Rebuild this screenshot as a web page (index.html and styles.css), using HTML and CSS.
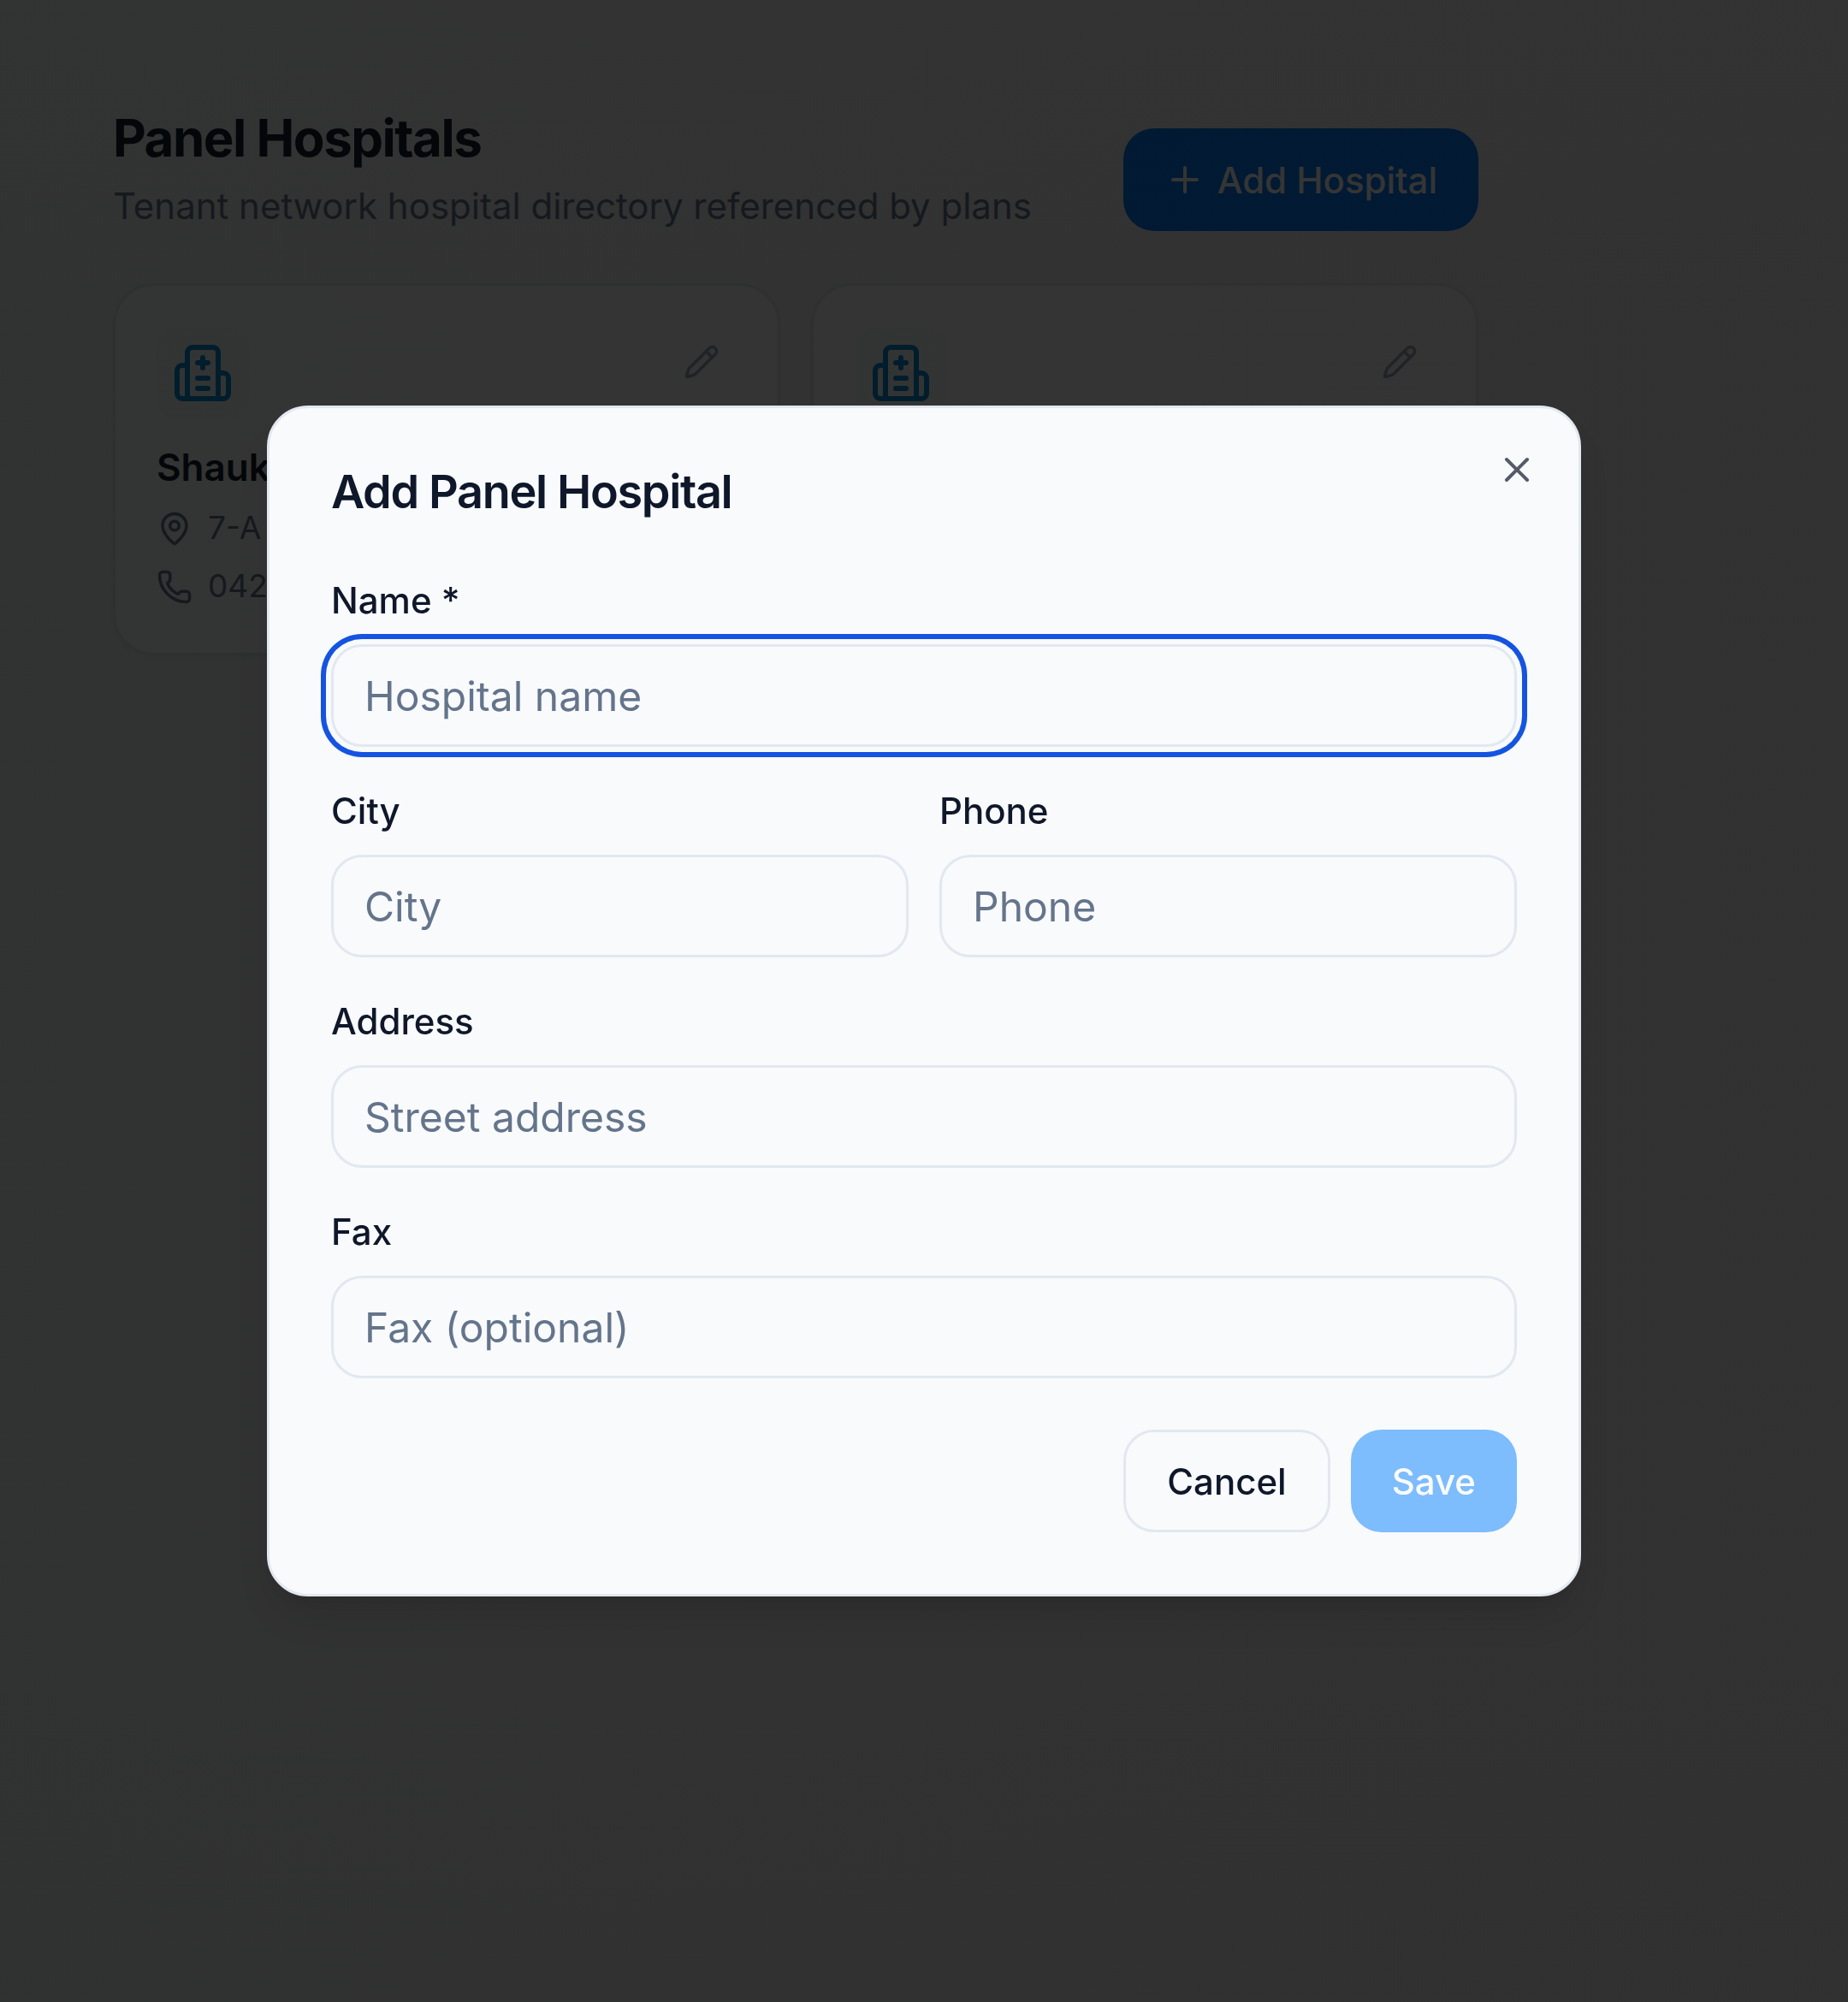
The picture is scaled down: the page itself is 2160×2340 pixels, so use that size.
FILE: index.html
```html
<!DOCTYPE html>
<html lang="en">
<head>
<meta charset="utf-8">
<title>Panel Hospitals</title>
<link rel="stylesheet" href="styles.css">
</head>
<body>
<svg class="sprite" aria-hidden="true">
  <symbol id="i-hospital" viewBox="0 0 24 24"><path d="M12 6v4"/><path d="M14 14h-4"/><path d="M14 18h-4"/><path d="M14 8h-4"/><path d="M18 12h2a2 2 0 0 1 2 2v6a2 2 0 0 1-2 2H4a2 2 0 0 1-2-2v-9a2 2 0 0 1 2-2h2"/><path d="M18 22V4a2 2 0 0 0-2-2H8a2 2 0 0 0-2 2v18"/></symbol>
  <symbol id="i-pencil" viewBox="0 0 24 24"><path d="M21.174 6.812a1 1 0 0 0-3.986-3.987L3.842 16.174a2 2 0 0 0-.5.83l-1.321 4.352a.5.5 0 0 0 .623.622l4.353-1.32a2 2 0 0 0 .83-.497z"/><path d="m15 5 4 4"/></symbol>
</svg>
<main class="page">
  <header class="page-head">
    <div>
      <h1 class="page-title">Panel Hospitals</h1>
      <p class="page-sub">Tenant network hospital directory referenced by plans</p>
    </div>
    <button class="add-btn" type="button">
      <svg class="icon icon-plus" viewBox="0 0 24 24"><path d="M5 12h14"/><path d="M12 5v14"/></svg>
      Add Hospital
    </button>
  </header>
  <section class="cards">
    <article class="card">
      <div class="card-top">
        <span class="card-badge"><svg class="icon icon-hospital"><use href="#i-hospital"/></svg></span>
        <button class="edit-btn" type="button"><svg class="icon icon-pencil"><use href="#i-pencil"/></svg></button>
      </div>
      <h2 class="card-name">Shauk</h2>
      <div class="card-row">
        <svg class="icon icon-row" viewBox="0 0 24 24"><path d="M20 10c0 4.993-5.539 10.193-7.399 11.799a1 1 0 0 1-1.202 0C9.539 20.193 4 14.993 4 10a8 8 0 0 1 16 0"/><circle cx="12" cy="10" r="3"/></svg>
        <span class="card-row-text">7-A</span>
      </div>
      <div class="card-row">
        <svg class="icon icon-row" viewBox="0 0 24 24"><path d="M13.832 16.568a1 1 0 0 0 1.213-.303l.355-.465A2 2 0 0 1 17 15h3a2 2 0 0 1 2 2v3a2 2 0 0 1-2 2A18 18 0 0 1 2 4a2 2 0 0 1 2-2h3a2 2 0 0 1 2 2v3a2 2 0 0 1-.8 1.6l-.468.351a1 1 0 0 0-.292 1.233 14 14 0 0 0 6.392 6.384"/></svg>
        <span class="card-row-text">042</span>
      </div>
    </article>
    <article class="card">
      <div class="card-top">
        <span class="card-badge"><svg class="icon icon-hospital"><use href="#i-hospital"/></svg></span>
        <button class="edit-btn" type="button"><svg class="icon icon-pencil"><use href="#i-pencil"/></svg></button>
      </div>
    </article>
  </section>
</main>

<div class="overlay">
  <div class="modal" role="dialog" aria-label="Add Panel Hospital">
    <button class="close-btn" type="button" aria-label="Close">
      <svg class="icon icon-close" viewBox="0 0 24 24"><path d="M18 6 6 18"/><path d="m6 6 12 12"/></svg>
    </button>
    <h2 class="modal-title">Add Panel Hospital</h2>
    <form class="form">
      <div class="field">
        <label class="label">Name *</label>
        <input class="input input-focus" placeholder="Hospital name">
      </div>
      <div class="field-row">
        <div class="field">
          <label class="label">City</label>
          <input class="input" placeholder="City">
        </div>
        <div class="field">
          <label class="label">Phone</label>
          <input class="input" placeholder="Phone">
        </div>
      </div>
      <div class="field">
        <label class="label">Address</label>
        <input class="input" placeholder="Street address">
      </div>
      <div class="field">
        <label class="label">Fax</label>
        <input class="input" placeholder="Fax (optional)">
      </div>
    </form>
    <div class="actions">
      <button class="btn btn-cancel" type="button">Cancel</button>
      <button class="btn btn-save" type="button">Save</button>
    </div>
  </div>
</div>
</body>
</html>
```
FILE: styles.css
```css
* { box-sizing: border-box; }
html, body { margin: 0; height: 100%; }
body {
  font-family: Inter, "Liberation Sans", sans-serif;
  color: #0f172a;
  background: linear-gradient(to bottom, #f2f2f2, #ececec);
  min-height: 2340px;
}
.sprite { display: none; }
.icon {
  display: block;
  fill: none;
  stroke: currentColor;
  stroke-width: 2;
  stroke-linecap: round;
  stroke-linejoin: round;
  flex: none;
}
button { font-family: inherit; cursor: pointer; }

.page { padding: 113px 432px 0 132px; }
.page-head {
  display: flex;
  justify-content: space-between;
  align-items: flex-end;
}
.page-title {
  margin: 0;
  font-size: 60px;
  line-height: 96px;
  font-weight: 700;
  letter-spacing: -0.025em;
}
.page-sub {
  margin: 0;
  font-size: 42px;
  line-height: 63px;
  color: #64748b;
}
.add-btn {
  display: flex;
  align-items: center;
  gap: 14px;
  height: 120px;
  margin-bottom: 2px;
  padding: 0 48px;
  border: 0;
  border-radius: 36px;
  background: #0078f5;
  color: #fff;
  font-size: 42px;
  font-weight: 500;
}
.icon-plus { width: 48px; height: 48px; }

.cards {
  display: grid;
  grid-template-columns: 1fr 1fr;
  gap: 36px;
  margin-top: 59px;
}
.card {
  border: 3px solid #dfe3e8;
  border-radius: 48px;
  background: #f8f8f8;
  padding: 48px;
  min-height: 435px;
  box-shadow: 0 3px 9px rgba(0, 0, 0, 0.05);
}
.card-top {
  display: flex;
  justify-content: space-between;
  align-items: flex-start;
}
.card-badge {
  display: flex;
  align-items: center;
  justify-content: center;
  width: 108px;
  height: 108px;
  border-radius: 24px;
  background: #f5f7fa;
  color: #0085d8;
}
.icon-hospital { width: 72px; height: 72px; }
.edit-btn {
  padding: 20px 20px 16px 16px;
  border: 0;
  background: none;
  color: #94a3b8;
}
.icon-pencil { width: 42px; height: 42px; }
.card-name {
  margin: 20px 0 15px;
  font-size: 44px;
  line-height: 72px;
  font-weight: 600;
}
.card-row {
  display: flex;
  align-items: center;
  gap: 18px;
  height: 42px;
  font-size: 37px;
  color: #64748b;
  white-space: nowrap;
}
.card-row + .card-row { margin-top: 26px; }
.card-row-text { padding-bottom: 3px; }
.icon-row { width: 42px; height: 42px; }

.overlay {
  position: fixed;
  inset: 0;
  display: flex;
  align-items: center;
  justify-content: center;
  background: linear-gradient(to right, rgba(1, 3, 2, 0.8), rgba(2, 2, 2, 0.8) 85%);
}
.modal {
  position: relative;
  width: 1536px;
  padding: 72px;
  border: 3px solid #e2e8f0;
  border-radius: 48px;
  background: #f8fafc;
  box-shadow: 0 30px 45px -9px rgba(0,0,0,.1), 0 12px 18px -12px rgba(0,0,0,.1);
}
.close-btn {
  position: absolute;
  top: 48px;
  right: 48px;
  padding: 0;
  border: 0;
  background: none;
  color: #555b69;
}
.icon-close { width: 48px; height: 48px; }
.modal-title {
  margin: 0 0 74px;
  font-size: 54px;
  line-height: 52px;
  font-weight: 600;
  letter-spacing: -0.025em;
}
.form { display: flex; flex-direction: column; gap: 48px; }
.field { display: flex; flex-direction: column; gap: 24px; }
.field-row { display: grid; grid-template-columns: 1fr 1fr; gap: 36px; }
.label {
  font-size: 42px;
  line-height: 54px;
  font-weight: 500;
}
.input {
  width: 100%;
  height: 120px;
  padding: 0 36px;
  border: 3px solid #e2e8f0;
  border-radius: 36px;
  background: #f8fafc;
  color: #0f172a;
  font: 400 48px Inter, "Liberation Sans", sans-serif;
  outline: none;
}
.input::placeholder { color: #64748b; opacity: 1; }
.input-focus { box-shadow: 0 0 0 6px #f8fafc, 0 0 0 12px #1554e0; }
.actions {
  display: flex;
  justify-content: flex-end;
  gap: 24px;
  margin-top: 60px;
}
.btn {
  height: 120px;
  padding: 0 48px;
  border-radius: 36px;
  font-size: 42px;
  font-weight: 500;
}
.btn-cancel { border: 3px solid #e2e8f0; background: #f8fafc; color: #0f172a; }
.btn-save { border: 0; background: #7dbcfd; color: #fbfcfe; }
```
